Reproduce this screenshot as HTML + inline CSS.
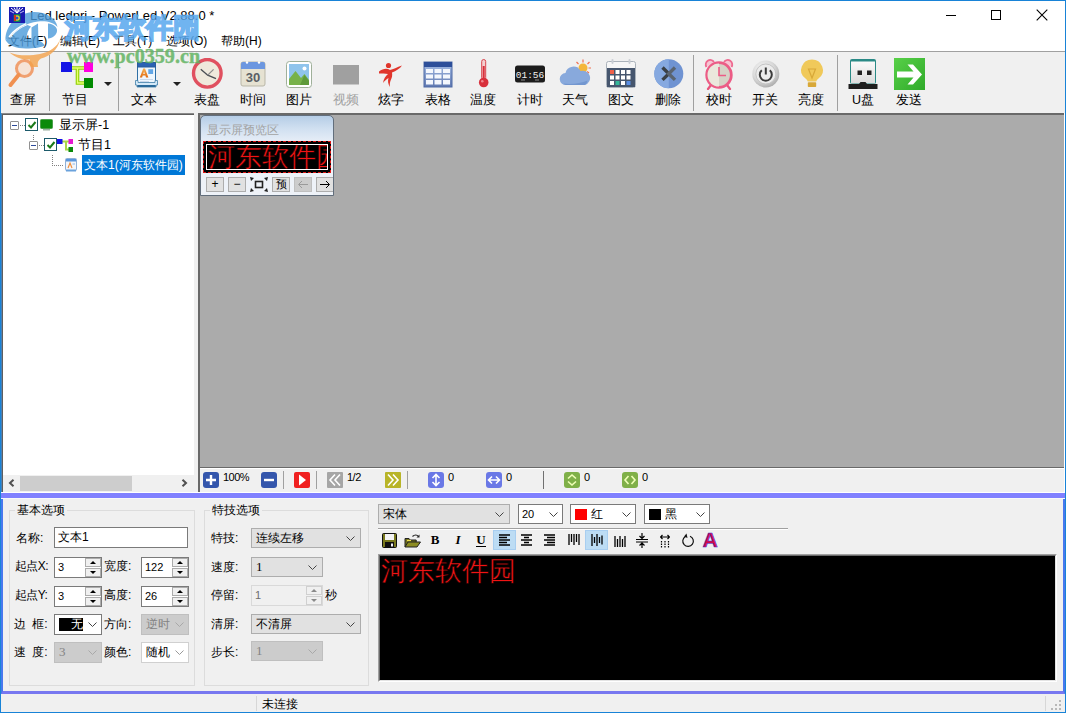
<!DOCTYPE html>
<html lang="zh">
<head>
<meta charset="utf-8">
<title>Led.ledprj - PowerLed V2.88.0 *</title>
<style>
*{box-sizing:border-box;margin:0;padding:0}
html,body{width:1066px;height:713px;overflow:hidden;background:#f0f0f0}
body{position:relative;font:12px/14px "Liberation Sans",sans-serif;color:#000}
.abs,.abs-all *{position:absolute}
#win{position:absolute;left:0;top:0;width:1066px;height:713px;overflow:hidden}
.wb{background:#1883d7;z-index:50}
#win>*{position:absolute}
/* title bar */
#title{left:0;top:0;width:1066px;height:30px;background:#fff}
#title .t{position:absolute;left:30px;top:8px;font-size:13px;line-height:16px;letter-spacing:0;white-space:nowrap}
#menu{left:0;top:30px;width:1066px;height:21px;background:#fff}
#menu span{position:absolute;top:4px;font-size:12px;line-height:14px;white-space:nowrap}
/* toolbar */
#tb{left:0;top:51px;width:1066px;height:62px;background:#f0f0f0;border-top:1px solid #a0a0a0}
#tb .b{position:absolute;top:6px;width:46px;height:54px}
#tb .b svg{position:absolute;left:7px;top:0;width:32px;height:32px}
#tb .b .l{position:absolute;left:-10px;right:-10px;top:35px;text-align:center;font-size:12.5px;line-height:14px;white-space:nowrap}
#tb .sep{position:absolute;top:3px;width:1px;height:56px;background:#a0a0a0}
#tb .dd{position:absolute;top:30px;width:0;height:0;border:4px solid transparent;border-top:4px solid #222;border-bottom:0}
/* tree */
#tree{left:1px;top:113px;width:193px;height:362px;background:#fff;border-top:1px solid #8a8a8a;border-left:1px solid #4a80b5;box-shadow:inset 1px 1px 0 #5f5f5f}
#tree .row{position:absolute;height:20px;font-size:12.5px;line-height:20px;white-space:nowrap}
#hscroll{left:1px;top:475px;width:193px;height:17px;background:#f0f0f0;border-left:1px solid #4a80b5;box-shadow:inset 1px 0 0 #5f5f5f}
/* workspace */
#ws{left:198px;top:113px;width:868px;height:354px;background:#ababab;border-top:2px solid #696969;border-left:2px solid #696969}
#zoombar{left:198px;top:467px;width:868px;height:25px;background:#f0f0f0;border-left:2px solid #696969;border-top:1px solid #696969;box-shadow:inset 0 1px 0 #fff}
/* bottom panel */
#bp{left:1px;top:492px;width:1064px;height:202px;background:#f0f0f0;border:2px solid #4878ee;border-top:0;border-bottom:3px solid #7878f0}
#bp:before{content:"";position:absolute;left:-2px;right:-2px;top:0;height:1px;background:#fff}
#bp:after{content:"";position:absolute;left:-2px;right:-2px;top:1px;height:5px;background:#8080ff;box-shadow:0 1px 0 #f8f8f8}
#status{left:0;top:694px;width:1066px;height:19px;background:#f0f0f0}

#L{position:absolute;left:0;top:0;width:0;height:0}
#L *{position:absolute}
.tx{white-space:nowrap;font-size:12.5px;line-height:14px}
.ss{white-space:nowrap;font-size:12px;line-height:14px}
.ebox{width:9px;height:9px;border:1px solid #919191;background:#fff;border-radius:1px}
.ebox:after{content:"";position:absolute;left:1px;top:3px;width:5px;height:1px;background:#2c4a9a}
.cb{width:13px;height:13px;border:1px solid #1c5a6a;background:#fff}
.dotv{width:1px;background:repeating-linear-gradient(to bottom,#808080 0 1px,transparent 1px 2px)}
.doth{height:1px;background:repeating-linear-gradient(to right,#808080 0 1px,transparent 1px 2px)}
.pbtn{width:18px;height:15px;border:1px solid #adadad;background:#e1e1e1;font-size:12px;line-height:13px;text-align:center}
.zi{width:16px;height:16px}
.zsep{width:1px;height:18px;top:471px;background:#a0a0a0}
.zt{font-size:11px;line-height:12px;top:471px;white-space:nowrap;letter-spacing:-.5px}
.gb{border:1px solid #dcdcdc}
.gbl{background:#f0f0f0;padding:0 2px;font-size:12px;line-height:14px;white-space:nowrap}
.inp{background:#fff;border:1px solid #7a7a7a;font-size:12px;line-height:19px;padding-left:3px;white-space:nowrap;overflow:hidden}
.cmb{background:#e1e1e1;border:1px solid #adadad;font-size:12px;line-height:18px;padding-left:4px;white-space:nowrap;overflow:hidden}
.cmb.w{background:#fff;border-color:#7a7a7a}
.cmb.d{background:#ccc;border-color:#bfbfbf;color:#838383}
.chev{width:9px;height:5px}
.sp{width:16px;height:9px;background:#f0f0f0;border:1px solid #acacac}
.sp:after{content:"";position:absolute;left:4px;top:2px;border:3px solid transparent}
.sp.u:after{border-bottom:3px solid #000;border-top:0}
.sp.dn:after{border-top:3px solid #000;border-bottom:0;top:2px}
.sp.dis:after{border-top-color:#8a8a8a;border-bottom-color:#8a8a8a}
.ti{width:23px;height:20px}
</style>
</head>
<body>
<div id="win">
  <div id="title"><span class="t">Led.ledprj - PowerLed V2.88.0 *</span></div>
  <div id="menu">
    <span style="left:8px">文件(F)</span>
    <span style="left:60px">编辑(E)</span>
    <span style="left:113px">工具(T)</span>
    <span style="left:166px">选项(O)</span>
    <span style="left:221px">帮助(H)</span>
  </div>
  <div id="tb">
    <div class="b" style="left:0px"><svg viewBox="0 0 32 32"><circle cx="17.5" cy="10.5" r="8" fill="#f6e3d6" stroke="#f0a070" stroke-width="3"/><path d="M11.5 17 L3.5 27" stroke="#f09050" stroke-width="4" stroke-linecap="round"/></svg><div class="l">查屏</div></div>
    <div class="sep" style="left:49px"></div>
    <div class="b" style="left:54px"><svg viewBox="0 0 32 32"><path d="M11 10h12M16.500 10v15h6.500" fill="none" stroke="#8ed000" stroke-width="3.600"/><path d="M11 10h12M16.500 10v15h6.500" fill="none" stroke="#e8ff70" stroke-width="1.400"/><rect x="0" y="4" width="11" height="10" fill="#1414e6"/><rect x="23" y="4" width="9" height="10" fill="#ff00e0"/><rect x="23" y="20" width="9" height="10" fill="#008a00"/></svg><div class="l" style="left:-12px;right:-8px">节目</div></div>
    <div class="dd" style="left:104px"></div>
    <div class="sep" style="left:118px"></div>
    <div class="b" style="left:121px"><svg viewBox="0 0 32 32"><defs><linearGradient id="gA" x1="0" y1="0" x2="0" y2="1"><stop offset="0" stop-color="#f8b050"/><stop offset="1" stop-color="#e06a10"/></linearGradient></defs><rect x="9.500" y="4.500" width="18" height="22" fill="#eef6fd" stroke="#2f6fa5"/><rect x="9.500" y="4.500" width="18" height="4.500" fill="#2b62b4" stroke="#2a5a9a"/><path d="M7.500 22.500h2.500v2h17v-2h2.500v4.500h-1.500v2h-19v-2h-1.500z" fill="#d4e9f8" stroke="#3f7ea8" stroke-width=".8"/><rect x="9.300" y="27" width="18.400" height="2" fill="#2a6a9a"/><path d="M11.800 19.500L15.200 10.500h1.800l3.400 9h-2.400l-.6-1.900h-2.700l-.6 1.900zM15.300 15.900h1.500l-.75-2.600z" fill="url(#gA)"/><rect x="20.300" y="11.200" width="4.800" height="4.800" fill="#62a6e6"/><path d="M12 21.500h13M12 23.500h9" stroke="#c0d0e4" stroke-width=".8"/></svg><div class="l" style="left:-10px;right:-10px">文本</div></div>
    <div class="dd" style="left:173px"></div>
    <div class="b" style="left:184px"><svg viewBox="0 0 32 32"><circle cx="16.3" cy="15.3" r="13.8" fill="#efe9dc" stroke="#e0505f" stroke-width="3.4"/><path d="M9.800 11.300L16.700 17.200L25 20.600" fill="none" stroke="#4a4e54" stroke-width="1.400"/><path d="M16.700 17.200L22.600 11.300" stroke="#8a8a8a" stroke-width="1.200"/></svg><div class="l">表盘</div></div>
    <div class="b" style="left:230px"><svg viewBox="0 0 32 32"><rect x="4" y="4" width="24" height="24" rx="2" fill="#e6e2d2" stroke="#b9b7a8" stroke-width="1"/><path d="M4 6a2 2 0 0 1 2-2h20a2 2 0 0 1 2 2v5H4z" fill="#6c97e0"/><circle cx="10" cy="4.5" r="1.2" fill="#fff"/><circle cx="22" cy="4.5" r="1.2" fill="#fff"/><text x="16" y="24" font-family="Liberation Sans" font-weight="bold" font-size="13" text-anchor="middle" fill="#5a5f66">30</text></svg><div class="l">时间</div></div>
    <div class="b" style="left:276px"><svg viewBox="0 0 32 32"><rect x="3.5" y="3.5" width="25" height="26" rx="3" fill="#fff" stroke="#9fb09a" stroke-width="1"/><rect x="6" y="6" width="20" height="21" fill="#8fc4ec"/><path d="M6 27 L6 21 L12.5 13 L18 20 L21.5 16 L26 22 L26 27z" fill="#77b24a"/><path d="M17 27 L21.5 17 L26 23v4z" fill="#5e9a3a"/><circle cx="21.5" cy="10.5" r="2" fill="#fff"/></svg><div class="l">图片</div></div>
    <div class="b" style="left:323px"><svg viewBox="0 0 32 32"><rect x="3" y="7" width="26" height="19.5" fill="#a0a0a0"/></svg><div class="l" style="color:#a0a0a0">视频</div></div>
    <div class="b" style="left:368px"><svg viewBox="0 0 32 32"><circle cx="13.5" cy="7.5" r="2.6" fill="#e0362c"/><path d="M4 13.5c4-3 8-3.5 11-1.5c3-.5 7-3 12-4.500c-2 3-6 5.500-10 7c.5 3 0 5-1 7c-1 2.500-1.500 4.500-1 7.500c-2-3-2.500-6-1.500-9c-2 1-4 3-5.500 5c.5-4 2.500-7 5-9c-3-1-6-.5-9-.5z" fill="#e0362c"/></svg><div class="l">炫字</div></div>
    <div class="b" style="left:415px"><svg viewBox="0 0 32 32"><defs><linearGradient id="gT" x1="0" y1="0" x2="0" y2="1"><stop offset="0" stop-color="#a8c0e8"/><stop offset="1" stop-color="#6078b0"/></linearGradient></defs><rect x="2" y="4" width="28" height="25" fill="url(#gT)" stroke="#4e6aa6" stroke-width="1"/><rect x="2" y="4" width="28" height="5" fill="#2d4f9a"/><g fill="#f4f7fd"><rect x="4" y="11" width="7" height="4"/><rect x="12.500" y="11" width="7" height="4"/><rect x="21" y="11" width="7" height="4"/><rect x="4" y="16.500" width="7" height="4"/><rect x="12.500" y="16.500" width="7" height="4"/><rect x="21" y="16.500" width="7" height="4"/><rect x="4" y="22" width="7" height="4.500"/><rect x="12.500" y="22" width="7" height="4.500"/><rect x="21" y="22" width="7" height="4.500"/></g></svg><div class="l">表格</div></div>
    <div class="b" style="left:460px"><svg viewBox="0 0 32 32"><rect x="14.700" y="1.500" width="4" height="20" rx="2" fill="#f4d0d0" stroke="#d8444c" stroke-width="1"/><rect x="15.700" y="8" width="2" height="14" fill="#d8303c"/><circle cx="16.700" cy="24.500" r="4.800" fill="#d8303c"/><circle cx="15.300" cy="23.300" r="1.300" fill="#f08890"/></svg><div class="l">温度</div></div>
    <div class="b" style="left:507px"><svg viewBox="0 0 32 32"><rect x="1" y="7.500" width="30" height="17" rx="2.500" fill="#1c1c1c"/><text x="16" y="19.500" font-family="Liberation Mono" font-size="9.500" text-anchor="middle" fill="#f0f0f0">01:56</text><rect x="7" y="21.500" width="4" height="1" fill="#888"/><rect x="21" y="21.500" width="4" height="1" fill="#888"/></svg><div class="l">计时</div></div>
    <div class="b" style="left:552px"><svg viewBox="0 0 32 32"><g stroke="#f07050" stroke-width="1.200"><path d="M24 1.500v3M17.500 4l2 2M30.500 4l-2 2M16 10h2.500M32 10h-2.500M30 15l-2-1.500"/></g><circle cx="24" cy="10" r="4.500" fill="#f4b63a"/><path d="M7 27a6 6 0 0 1-.5-12a8 8 0 0 1 15-2a6.500 6.500 0 0 1 4.500 14z" fill="#88a9dc"/><path d="M7 27a6 6 0 0 1-2.500-1.500c8 1 17 0 24-3a6.500 6.500 0 0 1-2.500 4.500z" fill="#7397d0"/></svg><div class="l">天气</div></div>
    <div class="b" style="left:598px"><svg viewBox="0 0 32 32"><rect x="1.500" y="3.500" width="29" height="26" rx="2" fill="#f6f6f6" stroke="#aab2ba" stroke-width="1"/><rect x="2" y="10" width="28" height="19" fill="#46566e"/><rect x="6.500" y="1" width="2" height="5" rx="1" fill="#c9ced4"/><rect x="23.500" y="1" width="2" height="5" rx="1" fill="#c9ced4"/><g fill="#fff"><rect x="10.500" y="12" width="4" height="4"/><rect x="16" y="12" width="4" height="4"/><rect x="21.500" y="12" width="4" height="4"/><rect x="5" y="17.500" width="4" height="4"/><rect x="10.500" y="17.500" width="4" height="4"/><rect x="16" y="17.500" width="4" height="4"/><rect x="21.500" y="17.500" width="4" height="4"/><rect x="5" y="23" width="4" height="4"/><rect x="16" y="23" width="4" height="4"/></g><rect x="5" y="12" width="4" height="4" fill="#f0604a"/><rect x="10.500" y="23" width="4" height="4" fill="#34b89a"/><rect x="21.500" y="23" width="4" height="4" fill="#5a8fe6"/></svg><div class="l">图文</div></div>
    <div class="b" style="left:645px"><svg viewBox="0 0 32 32"><circle cx="16.800" cy="15.700" r="14.500" fill="#6f93d2"/><path d="M16.800 1.200a14.500 14.500 0 0 0 0 29z" fill="#86a9e0"/><path d="M10.500 9.500l6.300 6.200l-6.300 6.200" fill="none" stroke="#3a4046" stroke-width="3.400"/><path d="M23 9.500l-6.300 6.200l6.300 6.200" fill="none" stroke="#5a6470" stroke-width="3.400"/></svg><div class="l">删除</div></div>
    <div class="sep" style="left:693px"></div>
    <div class="b" style="left:696px"><svg viewBox="0 0 32 32"><path d="M3.500 9a4.500 4.500 0 0 1 7.500-5M28.500 9a4.500 4.500 0 0 0-7.500-5" fill="#f7c4d2" stroke="#ee6a90" stroke-width="1.800"/><path d="M8 27l-3 4M24 27l3 4" stroke="#e8537c" stroke-width="2.200" stroke-linecap="round"/><circle cx="16" cy="17" r="12.300" fill="#d6d2c6" stroke="#ec5c86" stroke-width="2.800"/><path d="M16 5.500a11.500 11.500 0 0 0 0 23z" fill="#ebe7dc"/><path d="M16 9v8.500h7" fill="none" stroke="#ec5c86" stroke-width="1.600"/></svg><div class="l">校时</div></div>
    <div class="b" style="left:742px"><svg viewBox="0 0 32 32"><defs><radialGradient id="gP" cx=".4" cy=".35" r=".7"><stop offset="0" stop-color="#fdfdfd"/><stop offset=".6" stop-color="#d8d8d8"/><stop offset="1" stop-color="#a8a8a8"/></radialGradient></defs><circle cx="16.800" cy="16" r="13.500" fill="url(#gP)"/><circle cx="16.800" cy="16" r="10" fill="#ececec" stroke="#c4c4c4" stroke-width="1"/><path d="M12.800 12.200a6 6 0 1 0 8 0" fill="none" stroke="#3c3c3c" stroke-width="2"/><path d="M16.800 9.500v7" stroke="#3c3c3c" stroke-width="2"/></svg><div class="l">开关</div></div>
    <div class="b" style="left:788px"><svg viewBox="0 0 32 32"><path d="M17 1.500a11 10.500 0 0 0-7 18.500c1.500 1.300 2.500 2.300 2.800 3.500h8.400c.3-1.200 1.300-2.200 2.800-3.500a11 10.500 0 0 0-7-18.500z" fill="#f0c95a"/><path d="M13.500 11l3.500 9l3.500-9z" fill="none" stroke="#d8a838" stroke-width="1.200"/><rect x="12.800" y="24.300" width="8.400" height="4.700" rx=".8" fill="#d8a838"/></svg><div class="l">亮度</div></div>
    <div class="sep" style="left:837px"></div>
    <div class="b" style="left:840px"><svg viewBox="0 0 32 32"><defs><linearGradient id="gU" x1="0" y1="0" x2="0" y2="1"><stop offset="0" stop-color="#fafafa"/><stop offset="1" stop-color="#dcdcdc"/></linearGradient></defs><rect x="3" y="1" width="26" height="25" rx="2" fill="#2a8a86"/><rect x="4" y="3.500" width="24" height="22" fill="url(#gU)"/><rect x="10.500" y="12.500" width="4.500" height="4.500" fill="#222"/><rect x="20" y="12.500" width="4.500" height="4.500" fill="#222"/><path d="M1.500 26h10.500l1.500-2h5l1.500 2h10.500v5h-29z" fill="#1e1e1e"/></svg><div class="l">U盘</div></div>
    <div class="b" style="left:886px"><svg viewBox="0 0 32 32"><defs><linearGradient id="gS" x1="0" y1="0" x2="1" y2="1"><stop offset="0" stop-color="#58d048"/><stop offset="1" stop-color="#2faa2a"/></linearGradient></defs><rect x="1" y="0" width="32" height="32" fill="url(#gS)"/><path d="M4 13.500h16.500l-6-7h5.500l9 10l-9 10h-5.500l6-7H4z" fill="#fff"/></svg><div class="l">发送</div></div>
  </div>
  <div id="tree"></div>
  <div id="hscroll"></div>
  <div id="ws"></div>
  <div id="zoombar"></div>
  <div id="bp"></div>
  <div id="status"></div>
  <div id="L">
    <!-- tree -->
    <div class="ebox" style="left:10px;top:121px"></div>
    <div class="doth" style="left:20px;top:125px;width:5px"></div>
    <div class="cb" style="left:25px;top:118px"><svg style="left:1px;top:1px" width="10" height="10" viewBox="0 0 10 10"><path d="M1.500 5l2.500 2.500l4.500-5.500" fill="none" stroke="#1a7a1a" stroke-width="2"/></svg></div>
    <svg style="left:40px;top:119px" width="13" height="12" viewBox="0 0 13 12"><rect x=".5" y=".5" width="12" height="9" rx="1" fill="#0a8a0a" stroke="#4aa04a"/><rect x="3" y="10" width="7" height="1.500" fill="#9ab0a0"/></svg>
    <div class="tx" style="left:59px;top:118px">显示屏-1</div>
    <div class="dotv" style="left:33px;top:135px;height:6px"></div>
    <div class="ebox" style="left:29px;top:141px"></div>
    <div class="doth" style="left:39px;top:145px;width:5px"></div>
    <div class="cb" style="left:44px;top:138px"><svg style="left:1px;top:1px" width="10" height="10" viewBox="0 0 10 10"><path d="M1.500 5l2.500 2.500l4.500-5.500" fill="none" stroke="#1a7a1a" stroke-width="2"/></svg></div>
    <svg style="left:57px;top:138px" width="17" height="14" viewBox="0 0 17 14"><path d="M5 3.500h7M9 3.500v8h3" fill="none" stroke="#a8d848" stroke-width="2"/><rect x="0" y="1" width="5.500" height="5" fill="#1414e6"/><rect x="11.500" y="1" width="4.500" height="5" fill="#e818d0"/><rect x="11.500" y="9" width="4.500" height="5" fill="#0a8a0a"/></svg>
    <div class="tx" style="left:78px;top:138px">节目1</div>
    <div class="dotv" style="left:52px;top:155px;height:11px"></div>
    <div class="doth" style="left:52px;top:165px;width:12px"></div>
    <svg style="left:65px;top:158px" width="12" height="14" viewBox="0 0 12 14"><rect x=".5" y=".5" width="11" height="12" rx="1" fill="#f4f6fa" stroke="#8fb0d8"/><rect x="1" y="1" width="10" height="2.500" fill="#5a96dc"/><path d="M3 10l2-5l2 5" fill="none" stroke="#f09040" stroke-width="1.200"/><rect x="7.500" y="5.500" width="2.500" height="1" fill="#8fb7e4"/><rect x="1" y="11.500" width="10" height="2" fill="#6aa2dc"/></svg>
    <div style="left:82px;top:155px;width:103px;height:20px;background:#0078d7"></div>
    <div class="tx" id="seltx" style="left:84px;top:158px;color:#fff;font-size:12px">文本1(河东软件园)</div>
    <!-- h scroll -->
    <svg style="left:8px;top:479px" width="7" height="8" viewBox="0 0 7 8"><path d="M5.500.8L2 4l3.500 3.200" fill="none" stroke="#505050" stroke-width="2"/></svg>
    <div style="left:20px;top:476px;width:112px;height:15px;background:#cdcdcd"></div>
    <svg style="left:181px;top:479px" width="7" height="8" viewBox="0 0 7 8"><path d="M1.500.8L5 4L1.500 7.200" fill="none" stroke="#505050" stroke-width="2"/></svg>
    <!-- preview window -->
    <div id="pv" style="left:200px;top:115px;width:134px;height:81px;border:1px solid #626e7c;border-radius:5px 5px 0 0;background:linear-gradient(to bottom,#b5cde6 0,#cfdff0 12px,#e4ecf6 24px,#eef2f8 26px,#eef2f8 100%);overflow:hidden">
      <div class="ss" style="left:6px;top:7px;color:#a3a3a3">显示屏预览区</div>
      <div style="left:2px;top:25px;width:128px;height:32px;background:#000;outline:1px dashed #e01818;outline-offset:-1px;overflow:hidden">
        <div style="left:3px;top:3px;width:122px;height:26px;border:1px solid #fff;overflow:hidden"><span style="left:1px;top:-3px;font:27px/30px 'Liberation Serif',serif;color:#f01414;white-space:nowrap;letter-spacing:0;-webkit-text-stroke:.45px #000">河东软件园</span></div>
      </div>
      <div class="pbtn" style="left:5px;top:61px">+</div>
      <div class="pbtn" style="left:27px;top:61px">−</div>
      <svg style="left:49px;top:61px" width="18" height="15" viewBox="0 0 18 15"><rect x="5.500" y="4.500" width="7" height="6" fill="none" stroke="#222" stroke-width="1.600"/><path d="M0 0l4 1l-3 3zM18 0l-1 4l-3-3zM0 15l1-4l3 3zM18 15l-4-1l3-3z" fill="#222"/></svg>
      <div class="pbtn" style="left:71px;top:61px;font-size:11px">预</div>
      <div class="pbtn" style="left:93px;top:61px;background:#ccc;border-color:#bfbfbf;color:#9a9a9a"><svg style="left:2px;top:2px" width="12" height="9" viewBox="0 0 12 9"><path d="M11 4.500H2M5 1L1.500 4.500L5 8" fill="none" stroke="#9a9a9a" stroke-width="1"/></svg></div>
      <div class="pbtn" style="left:115px;top:61px"><svg style="left:2px;top:2px" width="12" height="9" viewBox="0 0 12 9"><path d="M1 4.500h9M7 1l3.500 3.500L7 8" fill="none" stroke="#000" stroke-width="1"/></svg></div>
    </div>
    <!-- zoom bar -->
    <svg class="zi" style="left:203px;top:472px" viewBox="0 0 16 16"><rect width="16" height="16" rx="3" fill="#3456ac"/><path d="M8 3v10M3 8h10" stroke="#fff" stroke-width="2.400"/></svg>
    <div class="zt" style="left:223px">100%</div>
    <svg class="zi" style="left:261px;top:472px" viewBox="0 0 16 16"><rect width="16" height="16" rx="3" fill="#3456ac"/><path d="M3 8h10" stroke="#fff" stroke-width="2.400"/></svg>
    <div class="zsep" style="left:283px"></div>
    <svg class="zi" style="left:294px;top:472px" viewBox="0 0 16 16"><rect width="16" height="16" rx="2" fill="#f02020"/><path d="M5 2.500l7 5.500l-7 5.500z" fill="#fff"/></svg>
    <div class="zsep" style="left:316px"></div>
    <svg class="zi" style="left:327px;top:472px" viewBox="0 0 16 16"><rect width="16" height="16" rx="1" fill="#a6a6a6"/><path d="M8 2.500L3 8l5 5.500M13 2.500L8 8l5 5.500" fill="none" stroke="#fff" stroke-width="1.600"/></svg>
    <div class="zt" style="left:347px">1/2</div>
    <svg class="zi" style="left:385px;top:472px" viewBox="0 0 16 16"><rect width="16" height="16" rx="1" fill="#b8b428"/><path d="M3 2.500L8 8l-5 5.500M8 2.500L13 8l-5 5.500" fill="none" stroke="#fff" stroke-width="1.600"/></svg>
    <div class="zsep" style="left:407px"></div>
    <svg class="zi" style="left:428px;top:472px" viewBox="0 0 16 16"><rect width="16" height="16" rx="3" fill="#6a78e6"/><path d="M8 2.500v11M4.500 6L8 2.500L11.500 6M4.500 10L8 13.500l3.500-3.500" fill="none" stroke="#fff" stroke-width="1.600"/></svg>
    <div class="zt" style="left:448px">0</div>
    <svg class="zi" style="left:486px;top:472px" viewBox="0 0 16 16"><rect width="16" height="16" rx="3" fill="#6a78e6"/><path d="M2.500 8h11M6 4.500L2.500 8L6 11.500M10 4.500L13.500 8L10 11.500" fill="none" stroke="#fff" stroke-width="1.600"/></svg>
    <div class="zt" style="left:506px">0</div>
    <div class="zsep" style="left:543px;background:#707070"></div>
    <svg class="zi" style="left:564px;top:472px" viewBox="0 0 16 16"><rect width="16" height="16" rx="3" fill="#7fb048"/><path d="M4 6.500L8 3l4 3.500M4 9.500L8 13l4-3.500" fill="none" stroke="#f0ffb8" stroke-width="1.600"/></svg>
    <div class="zt" style="left:584px">0</div>
    <svg class="zi" style="left:622px;top:472px" viewBox="0 0 16 16"><rect width="16" height="16" rx="3" fill="#7fb048"/><path d="M6.500 4L3 8l3.500 4M9.500 4L13 8l-3.500 4" fill="none" stroke="#f0ffb8" stroke-width="1.600"/></svg>
    <div class="zt" style="left:642px">0</div>
    <!-- bottom panel: group 1 -->
    <div class="gb" style="left:9px;top:510px;width:186px;height:176px"></div>
    <div class="gbl" style="left:15px;top:503px">基本选项</div>
    <div class="ss" style="left:16px;top:531px">名称:</div>
    <div class="inp" style="left:54px;top:527px;width:134px;height:21px">文本1</div>
    <div class="ss" style="left:15px;top:559px;letter-spacing:-.6px">起点X:</div>
    <div class="inp" style="left:54px;top:557px;width:48px;height:21px;font-size:11px">3</div>
    <div class="sp u" style="left:85px;top:558px"></div><div class="sp dn" style="left:85px;top:568px"></div>
    <div class="ss" style="left:104px;top:559px">宽度:</div>
    <div class="inp" style="left:141px;top:557px;width:48px;height:21px;font-size:11px">122</div>
    <div class="sp u" style="left:172px;top:558px"></div><div class="sp dn" style="left:172px;top:568px"></div>
    <div class="ss" style="left:15px;top:588px;letter-spacing:-.6px">起点Y:</div>
    <div class="inp" style="left:54px;top:586px;width:48px;height:21px;font-size:11px">3</div>
    <div class="sp u" style="left:85px;top:587px"></div><div class="sp dn" style="left:85px;top:597px"></div>
    <div class="ss" style="left:104px;top:588px">高度:</div>
    <div class="inp" style="left:141px;top:586px;width:48px;height:21px;font-size:11px">26</div>
    <div class="sp u" style="left:172px;top:587px"></div><div class="sp dn" style="left:172px;top:597px"></div>
    <div class="ss" style="left:14px;top:617px;word-spacing:3px">边 框:</div>
    <div class="cmb w" style="left:54px;top:614px;width:48px;height:21px"><span style="left:4px;top:3px;width:24px;height:13px;background:#000;color:#fff;font-size:12px;line-height:13px;text-align:right">无</span></div>
    <svg class="chev" style="left:88px;top:622px" viewBox="0 0 9 5"><path d="M.5.5l4 4l4-4" fill="none" stroke="#444" stroke-width="1"/></svg>
    <div class="ss" style="left:104px;top:617px">方向:</div>
    <div class="cmb d" style="left:141px;top:614px;width:48px;height:21px">逆时</div>
    <svg class="chev" style="left:175px;top:622px" viewBox="0 0 9 5"><path d="M.5.5l4 4l4-4" fill="none" stroke="#a8a8a8" stroke-width="1"/></svg>
    <div class="ss" style="left:14px;top:645px;word-spacing:3px">速 度:</div>
    <div class="cmb d" style="left:54px;top:642px;width:48px;height:21px;font-family:'Liberation Serif',serif;font-size:13px">3</div>
    <svg class="chev" style="left:88px;top:650px" viewBox="0 0 9 5"><path d="M.5.5l4 4l4-4" fill="none" stroke="#a8a8a8" stroke-width="1"/></svg>
    <div class="ss" style="left:104px;top:645px">颜色:</div>
    <div class="cmb w" style="left:141px;top:642px;width:48px;height:21px;border-color:#d0d0d0">随机</div>
    <svg class="chev" style="left:175px;top:650px" viewBox="0 0 9 5"><path d="M.5.5l4 4l4-4" fill="none" stroke="#999" stroke-width="1"/></svg>
    <!-- group 2 -->
    <div class="gb" style="left:204px;top:510px;width:165px;height:176px"></div>
    <div class="gbl" style="left:210px;top:503px">特技选项</div>
    <div class="ss" style="left:211px;top:531px">特技:</div>
    <div class="cmb" style="left:251px;top:528px;width:110px;height:20px">连续左移</div>
    <svg class="chev" style="left:346px;top:536px" viewBox="0 0 9 5"><path d="M.5.5l4 4l4-4" fill="none" stroke="#444" stroke-width="1"/></svg>
    <div class="ss" style="left:211px;top:560px">速度:</div>
    <div class="cmb" style="left:251px;top:557px;width:72px;height:20px;font-family:'Liberation Serif',serif;font-size:13px">1</div>
    <svg class="chev" style="left:308px;top:565px" viewBox="0 0 9 5"><path d="M.5.5l4 4l4-4" fill="none" stroke="#444" stroke-width="1"/></svg>
    <div class="ss" style="left:211px;top:588px">停留:</div>
    <div class="inp" style="left:251px;top:585px;width:72px;height:21px;background:#f0f0f0;border-color:#d9d9d9;color:#6d6d6d;font-size:11px">1</div>
    <div class="sp u dis" style="left:306px;top:586px;border-color:#d0d0d0"></div><div class="sp dn dis" style="left:306px;top:596px;border-color:#d0d0d0"></div>
    <div class="ss" style="left:325px;top:588px">秒</div>
    <div class="ss" style="left:211px;top:617px">清屏:</div>
    <div class="cmb" style="left:251px;top:614px;width:110px;height:20px">不清屏</div>
    <svg class="chev" style="left:346px;top:622px" viewBox="0 0 9 5"><path d="M.5.5l4 4l4-4" fill="none" stroke="#444" stroke-width="1"/></svg>
    <div class="ss" style="left:211px;top:645px">步长:</div>
    <div class="cmb d" style="left:251px;top:641px;width:72px;height:20px;font-family:'Liberation Serif',serif;font-size:13px">1</div>
    <svg class="chev" style="left:308px;top:649px" viewBox="0 0 9 5"><path d="M.5.5l4 4l4-4" fill="none" stroke="#a8a8a8" stroke-width="1"/></svg>
    <!-- editor header -->
    <div class="cmb" style="left:378px;top:504px;width:132px;height:20px">宋体</div>
    <svg class="chev" style="left:495px;top:512px" viewBox="0 0 9 5"><path d="M.5.5l4 4l4-4" fill="none" stroke="#444" stroke-width="1"/></svg>
    <div class="cmb w" style="left:518px;top:504px;width:45px;height:20px;padding-left:3px;font-size:11px">20</div>
    <svg class="chev" style="left:549px;top:512px" viewBox="0 0 9 5"><path d="M.5.5l4 4l4-4" fill="none" stroke="#444" stroke-width="1"/></svg>
    <div class="cmb w" style="left:570px;top:504px;width:66px;height:20px"><span style="left:4px;top:4px;width:12px;height:11px;background:#f00"></span><span style="left:20px;top:0">红</span></div>
    <svg class="chev" style="left:622px;top:512px" viewBox="0 0 9 5"><path d="M.5.5l4 4l4-4" fill="none" stroke="#444" stroke-width="1"/></svg>
    <div class="cmb w" style="left:644px;top:504px;width:66px;height:20px"><span style="left:4px;top:4px;width:12px;height:11px;background:#000"></span><span style="left:20px;top:0">黑</span></div>
    <svg class="chev" style="left:696px;top:512px" viewBox="0 0 9 5"><path d="M.5.5l4 4l4-4" fill="none" stroke="#444" stroke-width="1"/></svg>
    <div style="left:378px;top:528px;width:410px;height:1px;background:#a0a0a0"></div>
    <div style="left:378px;top:529px;width:410px;height:1px;background:#fff"></div>
    <!-- editor -->
    <div style="left:378px;top:554px;width:679px;height:128px;border:1px solid;border-color:#a0a0a0 #fff #fff #a0a0a0"></div>
    <div style="left:379px;top:555px;width:677px;height:126px;background:#000;border:1px solid;border-color:#696969 #e3e3e3 #e3e3e3 #696969;overflow:hidden"><span style="left:1px;top:-1px;font:300 27px/32px 'Liberation Serif',serif;color:#f01414;white-space:nowrap;-webkit-text-stroke:.45px #000">河东软件园</span></div>
    <!-- editor icon bar -->
    <svg style="left:382px;top:533px" width="15" height="15" viewBox="0 0 15 15"><rect x=".5" y=".5" width="14" height="14" rx="1" fill="#7a7a1e" stroke="#111"/><rect x="3" y="1" width="9" height="6" fill="#f4f4f4"/><rect x="3" y="9" width="9" height="5.500" fill="#111"/><rect x="9" y="10.500" width="2" height="3" fill="#f4f4f4"/></svg>
    <svg style="left:404px;top:533px" width="17" height="15" viewBox="0 0 17 15"><path d="M1 14V5.500h4l1.200 1.500h6V9" fill="#6e6e1a" stroke="#222" stroke-width="1"/><path d="M1 14l3-5h12.500l-3.500 5z" fill="#8c8c22" stroke="#222" stroke-width="1"/><path d="M3 7.500h4" stroke="#f0e050" stroke-width="1.200"/><path d="M8.500 3.500c2-2 4.500-2 6 0" fill="none" stroke="#222" stroke-width="1.200"/><path d="M15.500 1.500v3h-3z" fill="#222"/></svg>
    <div style="left:430px;top:533px;width:10px;font:bold 13px/14px 'Liberation Serif',serif;text-align:center">B</div>
    <div style="left:453px;top:533px;width:10px;font:italic bold 13px/14px 'Liberation Serif',serif;text-align:center">I</div>
    <div style="left:476px;top:533px;width:10px;font:bold 13px/14px 'Liberation Serif',serif;text-align:center">U</div>
    <div style="left:476px;top:546px;width:10px;height:1px;background:#000"></div>
    <div style="left:493px;top:530px;width:23px;height:20px;background:#bcdcf4;border:1px solid #a8cef0"></div>
    <svg style="left:499px;top:534px" width="12" height="12" viewBox="0 0 12 12"><path d="M0 1h11M0 3.500h8M0 6h11M0 8.500h8M0 11h11" stroke="#000" stroke-width="1.300"/></svg>
    <svg style="left:521px;top:534px" width="12" height="12" viewBox="0 0 12 12"><path d="M0 1h11M3 3.500h5M0 6h11M3 8.500h5M0 11h11" stroke="#000" stroke-width="1.300"/></svg>
    <svg style="left:544px;top:534px" width="12" height="12" viewBox="0 0 12 12"><path d="M0 1h11M3 3.500h8M0 6h11M3 8.500h8M0 11h11" stroke="#000" stroke-width="1.300"/></svg>
    <svg style="left:568px;top:534px" width="12" height="13" viewBox="0 0 12 13"><path d="M1 0v11M3.500 0v8M6 0v11M8.500 0v8M11 0v11" stroke="#000" stroke-width="1.300"/></svg>
    <div style="left:585px;top:530px;width:23px;height:20px;background:#bcdcf4;border:1px solid #a8cef0"></div>
    <svg style="left:591px;top:534px" width="12" height="13" viewBox="0 0 12 13"><path d="M1 0v12M3.500 3v6M6 0v12M8.500 3v6M11 1.500v9" stroke="#000" stroke-width="1.300"/></svg>
    <svg style="left:614px;top:535px" width="12" height="12" viewBox="0 0 12 12"><path d="M1 1v11M3.500 4v8M6 1v11M8.500 4v8M11 1v11" stroke="#000" stroke-width="1.300"/></svg>
    <svg style="left:636px;top:533px" width="12" height="15" viewBox="0 0 12 15"><path d="M0 6.500h12M0 9h12M6 0v5.500M6 10v5M3.500 3L6 5.500L8.500 3M3.500 12.500L6 10l2.500 2.500" fill="none" stroke="#000" stroke-width="1.200"/></svg>
    <svg style="left:660px;top:534px" width="10" height="14" viewBox="0 0 10 14"><path d="M.5 3h9M2.500 1L.5 3l2 2M7.500 1l2 2l-2 2" fill="none" stroke="#000" stroke-width="1.200"/><path d="M1.500 7v7M5 7v7M8.500 7v7" stroke="#000" stroke-width="1.200" stroke-dasharray="1.500 1"/></svg>
    <svg style="left:681px;top:533px" width="14" height="15" viewBox="0 0 14 15"><path d="M9 3.200a5.300 5.300 0 1 1-4.500.300" fill="none" stroke="#111" stroke-width="1.200"/><path d="M5.500.5l-2.500 3l3.500 1.500z" fill="#111"/></svg>
    <div style="left:701px;top:529px;width:18px;font:bold 21px/22px 'Liberation Sans',sans-serif;color:#d00c48;text-align:center;-webkit-text-stroke:.6px #3a28d0">A</div>
    <!-- app icon -->
    <svg style="left:9px;top:7px;z-index:5" width="16" height="16" viewBox="0 0 16 16"><rect width="16" height="16" fill="#1a1ab0"/><path d="M8 6L2 1M8 6L5 .5M8 6V0M8 6l3-5.500M8 6l6-5" stroke="#fff" stroke-width="1"/><path d="M1 4l4 2M15 4l-4 2" stroke="#e8e8ff" stroke-width=".8"/><rect x="4.500" y="7" width="7" height="8" rx="1" fill="#0a7a5a"/><circle cx="8" cy="11" r="2.800" fill="#e8d030"/><circle cx="8" cy="11" r="1.500" fill="#2050d0"/><rect x="5" y="8" width="2" height="6" fill="#d03020"/></svg>
    <!-- window controls -->
    <div style="left:946px;top:15px;width:10px;height:1px;background:#000"></div>
    <div style="left:991px;top:10px;width:10px;height:10px;border:1px solid #000"></div>
    <svg style="left:1036px;top:9px" width="12" height="12" viewBox="0 0 12 12"><path d="M.7.7l10.600 10.600M11.300.7L.7 11.300" stroke="#000" stroke-width="1.100"/></svg>
    <!-- watermark -->
    <svg style="left:0;top:8px" width="70" height="66" viewBox="0 8 70 66"><g opacity=".8"><g fill="#4a9ada"><path d="M5.500 40C5 26 18 12 34 12C46 12 56 18 57.500 27C54 22.500 46 20.500 38 21.500C26 23 14 30 9 38.500Z"/><path d="M10 39C14 32.500 20 28 27.500 25L31 26.500C28 30 26.500 34 26.500 40Z"/><path d="M5.500 40C8 45 16 48.500 26 48.500C34 48.500 41 47.500 45 45.500C42 41.500 38 39.500 34 39L9 38Z"/><path d="M31.500 27.500L38 23.500L38.500 47L31.500 47.500Z"/><path d="M48 23.500C53 24 57.500 27 57 31C56.500 35 53 38 48 38.500Z"/></g><path d="M8.500 36.500C13 30 19 26 26 23L26.500 24.300C20 27.500 14 31.500 9.500 37.500Z" fill="#fff"/><path d="M60 39.500C57 47 50 52 40 54C30 56 18 56 9.500 52.500C16 58 24 60 30 59.500C29 62 29 65 31 67L38 67C37 63 38 60 41 58.500C50 56 58 50 60 39.500Z" fill="#f4a24a"/></g></svg>
    <div style="left:65px;top:12px;font:900 27px/32px 'Liberation Sans',sans-serif;color:#58a8ee;opacity:.85;white-space:nowrap;letter-spacing:0;-webkit-text-stroke:1.700px #58a8ee">河东软件园</div>
    <div id="wurl" style="left:67px;top:43px;font:bold 22px/26px 'Liberation Serif',serif;color:#62b462;opacity:.85;white-space:nowrap;letter-spacing:0;transform:scaleX(.915);transform-origin:0 0;-webkit-text-stroke:.4px #62b462">www.pc0359.cn</div>
    <div style="left:1064px;top:113px;width:1px;height:379px;background:#fff"></div>
    <!-- status -->
    <div style="left:256px;top:696px;width:1px;height:15px;background:#d7d7d7"></div>
    <div class="ss" style="left:262px;top:697px">未连接</div>
    <div style="left:1045px;top:696px;width:1px;height:15px;background:#d7d7d7"></div>
    <svg style="left:1050px;top:699px" width="12" height="12" viewBox="0 0 12 12"><g fill="#b8b8b8"><rect x="9" y="1" width="2" height="2"/><rect x="5" y="5" width="2" height="2"/><rect x="9" y="5" width="2" height="2"/><rect x="1" y="9" width="2" height="2"/><rect x="5" y="9" width="2" height="2"/><rect x="9" y="9" width="2" height="2"/></g></svg>
  </div>
  <div class="wb" style="left:0;top:0;width:1066px;height:1px"></div>
  <div class="wb" style="left:0;top:712px;width:1066px;height:1px"></div>
  <div class="wb" style="left:0;top:0;width:1px;height:713px"></div>
  <div class="wb" style="left:1065px;top:0;width:1px;height:713px"></div>
</div>
</body>
</html>
